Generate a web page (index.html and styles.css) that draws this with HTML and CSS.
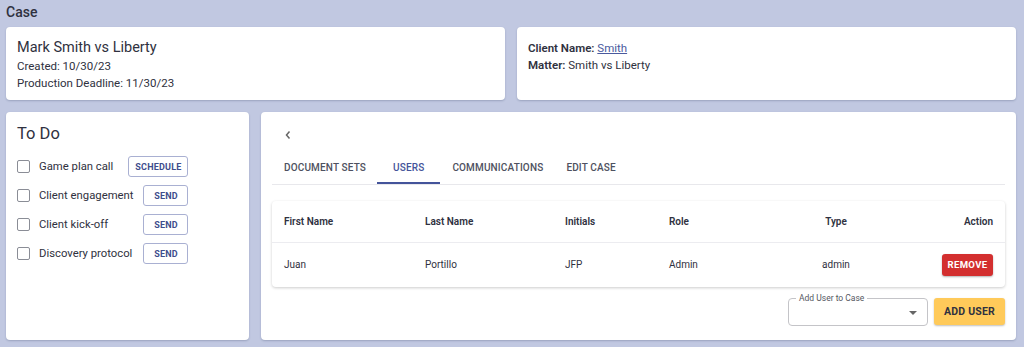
FILE: index.html
```html
<!DOCTYPE html>
<html lang="en">
<head>
    <meta charset="UTF-8">
    <meta name="viewport" content="width=device-width, initial-scale=1.0">
    <title>Case</title>
    <link rel="stylesheet" href="styles.css">
</head>
<body>
    <main class="page">
        <h1 class="page-title">Case</h1>

        <div class="row row-top">
            <section class="card case-info">
                <h2>Mark Smith vs Liberty</h2>
                <p>Created: 10/30/23</p>
                <p>Production Deadline: 11/30/23</p>
            </section>
            <section class="card client-info">
                <p><b>Client Name:</b> <a href="#">Smith</a></p>
                <p><b>Matter:</b> Smith vs Liberty</p>
            </section>
        </div>

        <div class="row row-bottom">
            <section class="card todo">
                <h2>To Do</h2>
                <div class="todo-list">
                    <div class="todo-item">
                        <label><span class="checkbox"></span>Game plan call</label>
                        <button class="btn-outline">Schedule</button>
                    </div>
                    <div class="todo-item">
                        <label><span class="checkbox"></span>Client engagement</label>
                        <button class="btn-outline">Send</button>
                    </div>
                    <div class="todo-item">
                        <label><span class="checkbox"></span>Client kick-off</label>
                        <button class="btn-outline">Send</button>
                    </div>
                    <div class="todo-item">
                        <label><span class="checkbox"></span>Discovery protocol</label>
                        <button class="btn-outline">Send</button>
                    </div>
                </div>
            </section>

            <section class="card detail">
                <div class="back">
                    <svg width="8" height="10" viewBox="0 0 8 10"><path d="M5.5 1.5 L2.5 5 L5.5 8.5" fill="none" stroke="#666" stroke-width="1.5"/></svg>
                </div>
                <nav class="tabs">
                    <span class="tab">Document Sets</span>
                    <span class="tab active">Users</span>
                    <span class="tab">Communications</span>
                    <span class="tab">Edit Case</span>
                </nav>

                <div class="table-wrap">
                    <table class="users">
                        <thead>
                            <tr>
                                <th class="c1">First Name</th>
                                <th class="c2">Last Name</th>
                                <th class="c3">Initials</th>
                                <th class="c4">Role</th>
                                <th class="c5">Type</th>
                                <th class="c6">Action</th>
                            </tr>
                        </thead>
                        <tbody>
                            <tr>
                                <td>Juan</td>
                                <td>Portillo</td>
                                <td>JFP</td>
                                <td>Admin</td>
                                <td class="c5">admin</td>
                                <td class="c6"><button class="btn-remove">Remove</button></td>
                            </tr>
                        </tbody>
                    </table>
                </div>

                <div class="add-user">
                    <div class="select">
                        <span class="select-label">Add User to Case</span>
                        <span class="arrow"></span>
                    </div>
                    <button class="btn-add">Add User</button>
                </div>
            </section>
        </div>
    </main>
</body>
</html>
```

FILE: styles.css
```css
body {
    margin: 0;
    font-family: Roboto, "Liberation Sans", sans-serif;
    background-color: #c1c8e1;
    color: #2f3140;
    height: 347px;
    overflow: hidden;
}

.page {
    padding: 0 8px 0 6px;
}

.page-title {
    font-size: 14px;
    font-weight: 500;
    margin: 0;
    padding: 4px 0 0 0;
    height: 23px;
    line-height: 17px;
}

.row {
    display: flex;
    gap: 12px;
}

.row-top {
    height: 73px;
    margin-bottom: 12px;
}

.row-bottom {
    height: 228px;
}

.card {
    background-color: #fff;
    border-radius: 4px;
    box-shadow: 0 1px 2px rgba(40, 50, 90, 0.25);
    box-sizing: border-box;
}

.card p {
    margin: 0;
}

.case-info,
.client-info {
    flex: 1;
}

.case-info {
    padding: 11px 11px;
}

.case-info h2 {
    font-size: 14.5px;
    font-weight: 400;
    margin: 0 0 1px 0;
    line-height: 19px;
}

.case-info p {
    font-size: 11.5px;
    line-height: 17px;
}

.client-info {
    padding: 13px 11px;
}

.client-info p {
    font-size: 11.5px;
    line-height: 17px;
}

.client-info b {
    font-weight: 600;
}

.client-info a {
    color: #4a5a9e;
}

.todo {
    flex: none;
    width: 243px;
    padding: 10px 11px;
}

.todo h2 {
    font-size: 16.5px;
    font-weight: 400;
    margin: 0 0 10px 0;
    line-height: 24px;
}

.todo-list {
    display: inline-flex;
    flex-direction: column;
    gap: 8px;
}

.todo-item {
    display: flex;
    align-items: center;
    justify-content: space-between;
    gap: 10px;
    height: 21px;
}

.todo-item label {
    display: flex;
    align-items: center;
    font-size: 11.3px;
}

.checkbox {
    width: 11px;
    height: 11px;
    border: 1px solid #8a8d96;
    border-radius: 2px;
    margin-right: 9px;
}

.btn-outline {
    font-family: inherit;
    font-size: 9px;
    font-weight: 700;
    letter-spacing: 0.2px;
    text-transform: uppercase;
    color: #3e4d8c;
    background: #fff;
    border: 1px solid #a9b0d2;
    border-radius: 3px;
    height: 21px;
    padding: 0 6px;
    min-width: 45px;
    cursor: pointer;
}

.detail {
    flex: 1;
    min-width: 0;
    padding: 0 11px;
}

.back {
    height: 38px;
    display: flex;
    align-items: flex-end;
    padding-left: 12px;
    box-sizing: border-box;
    padding-bottom: 10px;
}

.tabs {
    display: flex;
    border-bottom: 1px solid #e8e8ec;
    height: 34px;
}

.tab {
    font-size: 10px;
    font-weight: 500;
    letter-spacing: 0.15px;
    text-transform: uppercase;
    color: #4e5160;
    padding: 0 11px 0 12px;
    display: flex;
    align-items: center;
    box-sizing: border-box;
}

.tab.active {
    color: #44549a;
    border-bottom: 2px solid #44549a;
    padding: 2px 16px 0 16px;
}

.table-wrap {
    margin-top: 16px;
    border-radius: 4px;
    box-shadow: 0 1px 3px rgba(0, 0, 0, 0.2);
}

.users {
    width: 100%;
    border-collapse: collapse;
    table-layout: fixed;
}

.users th,
.users td {
    font-size: 10px;
    text-align: left;
    padding: 0 12px;
    box-sizing: border-box;
}

.users th {
    font-weight: 600;
    height: 41px;
    border-bottom: 1px solid #ececf0;
}

.users td {
    height: 45px;
}

.users .c1 { width: 141px; }
.users .c2 { width: 140px; }
.users .c3 { width: 104px; }
.users .c4 { width: 110px; }
.users .c5 { width: 138px; text-align: center; }
.users .c6 { text-align: right; }

.btn-remove {
    font-family: inherit;
    font-size: 9.5px;
    font-weight: 700;
    letter-spacing: 0.4px;
    text-transform: uppercase;
    color: #fff;
    background: #d32f2f;
    border: none;
    border-radius: 3px;
    height: 22px;
    width: 51px;
    padding: 0;
    box-shadow: 0 1px 2px rgba(0, 0, 0, 0.3);
}

.add-user {
    display: flex;
    justify-content: flex-end;
    gap: 6px;
    margin-top: 11px;
}

.select {
    position: relative;
    width: 140px;
    height: 28px;
    border: 1px solid #c4c4c8;
    border-radius: 4px;
    box-sizing: border-box;
}

.select-label {
    position: absolute;
    top: -6px;
    left: 7px;
    background: #fff;
    padding: 0 3px;
    font-size: 8.5px;
    line-height: 10px;
    color: #55575f;
}

.arrow {
    position: absolute;
    right: 10px;
    top: 12px;
    border-left: 4px solid transparent;
    border-right: 4px solid transparent;
    border-top: 4px solid #666;
}

.btn-add {
    font-family: inherit;
    font-size: 10.5px;
    font-weight: 700;
    letter-spacing: 0.2px;
    text-transform: uppercase;
    color: #2f3140;
    background: #ffca5a;
    border: none;
    border-radius: 3px;
    height: 27px;
    width: 71px;
    box-shadow: 0 1px 2px rgba(0, 0, 0, 0.25);
}
```
